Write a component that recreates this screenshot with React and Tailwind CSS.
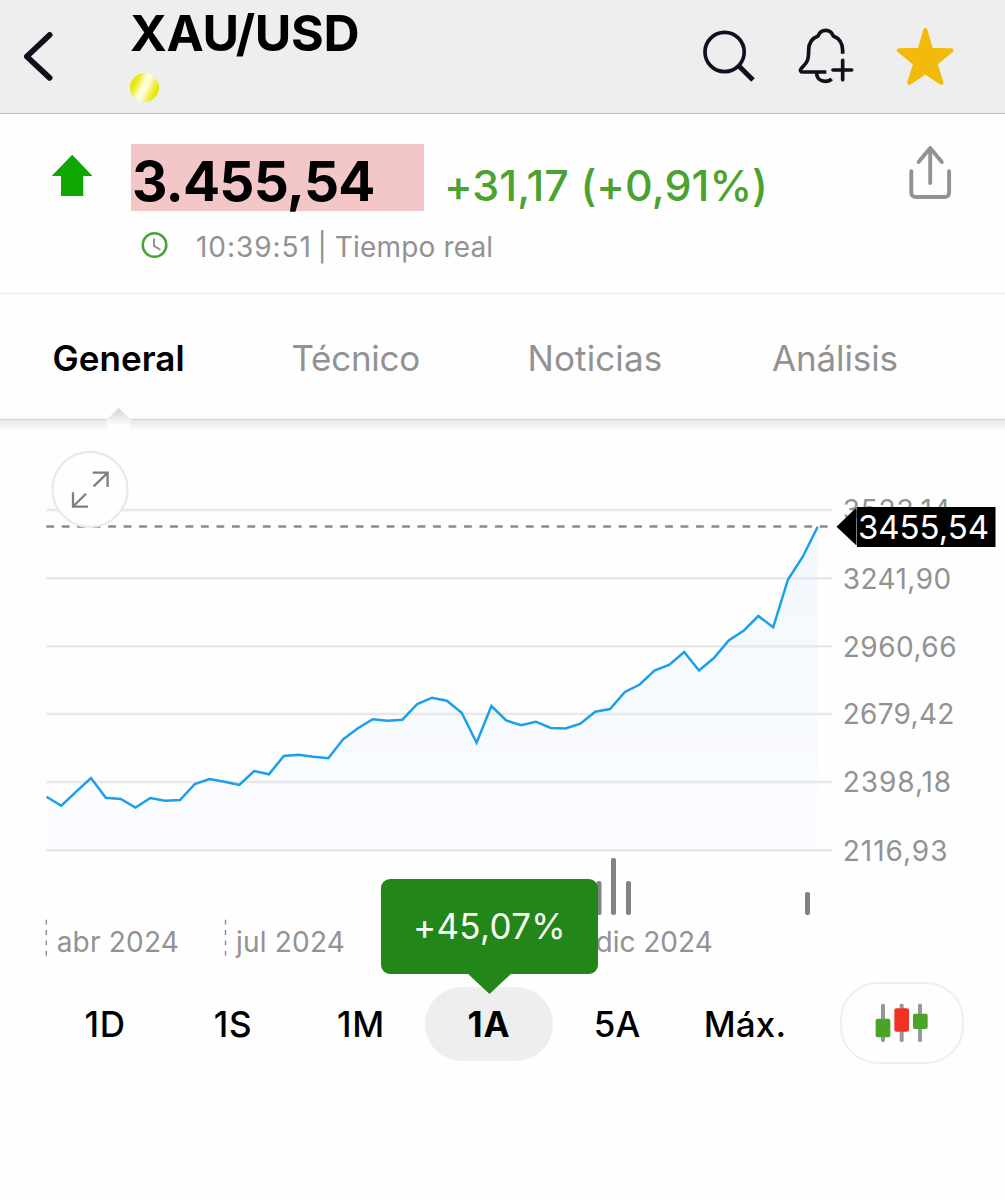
const tabs = [
  { label: 'General', active: true, style: 'tracking-[0.05px]' },
  { label: 'Técnico', style: 'ml-[106.7px] tracking-[-0.25px]' },
  { label: 'Noticias', style: 'ml-[107.5px] tracking-[0.1px]' },
  { label: 'Análisis', style: 'ml-[109.7px] tracking-[-0.1px]' },
];

const ranges = [
  { label: '1D', tracking: 'tracking-[0.7px]' },
  { label: '1S', tracking: 'tracking-[0.7px]' },
  { label: '1M', tracking: 'tracking-[0.7px]' },
  { label: '1A', change: '+45,07%' },
  { label: '5A', tracking: 'tracking-[0.1px]' },
  { label: 'Máx.', tracking: 'tracking-[0.2px]' },
];

const gridRows = [
  { y: 510, label: '3523,14', spacing: 0.8 },
  { y: 578.3, label: '3241,90', spacing: 0.45 },
  { y: 646.3, label: '2960,66', spacing: 0.5 },
  { y: 714, label: '2679,42', spacing: 0.3 },
  { y: 782, label: '2398,18', spacing: 0.95 },
  { y: 850.3, label: '2116,93', spacing: 1 },
];

// weekly closes, one point every STEP px
const X0 = 46.5;
const STEP = 14.83;
const closes = [
  796.7, 805.7, 791.7, 778, 797.7, 799, 807.5, 798, 800.7, 800, 784, 779, 781.7, 785, 771, 774.3, 756, 754.7,
  756.7, 758.3, 739.3, 728.3, 719.3, 720.7, 719.7, 704, 697.7, 700.7, 712.7, 742.7, 706, 720.5, 725.3, 721.7,
  728, 728.5, 723.7, 711.7, 709, 692, 684.5, 670.5, 664.7, 652, 670.5, 658, 640.5, 630.8, 616, 627.3, 579.5,
  556.7, 526.7,
];
const line = closes.map((y, i) => `${(X0 + i * STEP).toFixed(1)},${y}`).join(' ');
const lastX = X0 + (closes.length - 1) * STEP;

const volumes = [
  { x: 599, top: 881 },
  { x: 613.5, top: 858 },
  { x: 628.5, top: 881 },
  { x: 807.5, top: 892 },
];

const dates = [
  { x: 46.3, textX: 56.7, label: 'abr 2024', spacing: 0.2 },
  { x: 225.5, textX: 236, label: 'jul 2024', spacing: 0.2 },
  { textX: 595.5, label: 'dic 2024', spacing: 0 },
];

function Header() {
  return (
    <header className="flex h-[114px] border-b border-[#bdbdbd] bg-[#eeeeee]">
      <svg className="ml-6 mt-8 h-[50px] w-[30px] shrink-0" viewBox="24 32 30 50" fill="none">
        <path d="M49.6 35 26.8 56.5l22.8 21.3" stroke="#10101c" strokeWidth="5.8" strokeLinecap="round" strokeLinejoin="round" />
      </svg>

      <div className="ml-[76px] flex flex-col">
        <h1 className="mt-[3px] text-[50px] leading-[60px] font-bold tracking-[-0.4px] whitespace-nowrap text-black">XAU/USD</h1>
        <span className="mt-[10px] size-[29px] rounded-full bg-[linear-gradient(115deg,#e2e200_10%,#ecec20_26%,#fcfcc8_42%,#fefee4_52%,#f3f370_66%,#e6e600_82%,#f0f060_100%)]" />
      </div>

      <div className="ml-auto flex pr-[49px]">
        <svg className="mt-[28px] h-[56px] w-[56px]" viewBox="702 28 56 56" fill="none" stroke="#10101c">
          <circle cx="724.6" cy="52" r="19.6" strokeWidth="3.7" />
          <path d="M738.6 65.8 753 80" strokeWidth="5" />
        </svg>
        <svg className="ml-[39px] mt-[26px] h-[60px] w-[60px]" viewBox="354 78 180 180" fill="none" stroke="#10101c" strokeWidth="11" strokeLinejoin="round">
          <path d="M491 161V152C491 131 481 115 463 108C458 95 450 91 440 91S422 95 417 108C399 115 389 131 389 150C389 186 382 189 367 205C362 211 365 216 371 216H442" />
          <path d="M413 219C413 235 425 244 439 244C447 244 453 242 458 237" />
          <path d="M491 181V239M462 210H518" strokeLinecap="round" />
        </svg>
        <svg className="ml-[39px] mt-[26px] h-[60px] w-[60px]" viewBox="648 78 180 180">
          <path
            d="M736 91 753 150 814 151 766 191 784 248 736 216 688 248 706 191 657 151 719 150Z"
            fill="#f2bb0c"
            stroke="#f2bb0c"
            strokeWidth="13"
            strokeLinejoin="round"
          />
        </svg>
      </div>
    </header>
  );
}

function Quote() {
  return (
    <section className="flex h-[180px] border-b border-[#ebebeb]">
      <svg className="ml-[51px] mt-[40px] h-[43px] w-[43px] shrink-0" viewBox="51 154 43 43">
        <path d="M51.7 176 72.2 154.7 92.5 176H83.3V196H61V176Z" fill="#10a800" />
      </svg>

      <div className="ml-[37px] flex flex-col">
        <div className="flex">
          <span className="mt-[30px] h-[67px] w-[293px] bg-[#f3c6c8] pt-[4px] pl-px text-[55px] leading-[67px] font-bold tracking-[-0.85px] text-black">
            3.455,54
          </span>
          <span className="mt-[41px] ml-[20px] text-[43px] leading-[60px] font-medium tracking-[0.03px] whitespace-nowrap text-[#4ca22f]">
            +31,17 (+0,91%)
          </span>
        </div>
        <div className="mt-[14px] flex items-center pl-[9px]">
          <svg className="-mt-1 size-[28px]" viewBox="140.2 230.7 28 28" fill="none">
            <circle cx="154.7" cy="244.7" r="11.8" stroke="#4ca22f" strokeWidth="2.5" />
            <path d="M154.2 238.2V245.6L160.6 249.4" stroke="#8f8f92" strokeWidth="1.9" />
          </svg>
          <span className="ml-[28px] text-[28px] leading-[36px] tracking-[0.15px] whitespace-pre text-[#929292]">
            <span className="mr-[-2.5px] tracking-[0.95px]">10:39:51</span> | Tiempo real
          </span>
        </div>
      </div>

      <svg className="mr-[52px] mt-[30px] ml-auto h-[58px] w-[46px]" viewBox="907 144 46 58" fill="none" stroke="#929292" strokeWidth="3.9" strokeLinecap="round" strokeLinejoin="round">
        <path d="M930.2 183V148.2M918.6 162 930.2 148 941.8 162" />
        <path d="M911.3 171.2V192.2Q911.3 197 916.1 197H944.3Q949.1 197 949.1 192.2V171.2" />
      </svg>
    </section>
  );
}

function Tabs() {
  return (
    <nav className="flex h-[125px] pl-[52.5px] text-[35px] leading-[128px]">
      {tabs.map((t) => (
        <span key={t.label} className={`${t.style} ${t.active ? 'font-semibold text-black' : 'text-[#929292]'}`}>
          {t.label}
        </span>
      ))}
    </nav>
  );
}

function Chart() {
  return (
    <svg className="block h-[563px] w-[1005px]" viewBox="0 405 1005 563" fill="none">
      <defs>
        <linearGradient id="area" x1="0" y1="526" x2="0" y2="850" gradientUnits="userSpaceOnUse">
          <stop offset="0" stopColor="#f2f8fe" />
          <stop offset="1" stopColor="#fbfcfe" />
        </linearGradient>
        <linearGradient id="shade" x1="0" y1="419" x2="0" y2="431" gradientUnits="userSpaceOnUse">
          <stop offset="0" stopColor="#e6e6e6" />
          <stop offset="1" stopColor="#fefefe" />
        </linearGradient>
        <linearGradient id="notch" x1="0" y1="408" x2="0" y2="426" gradientUnits="userSpaceOnUse">
          <stop offset="0" stopColor="#d4d4d4" />
          <stop offset="1" stopColor="#fefefe" />
        </linearGradient>
      </defs>

      {/* lower edge of the tab bar, with the pointer of the active tab */}
      <rect y="419" width="1005" height="13" fill="url(#shade)" />
      <rect y="418.8" width="1005" height="1.3" fill="#d6d6d6" />
      <path d="M106 420 118.7 408 131.5 420 127 432H110Z" fill="url(#notch)" />

      <polygon points={`${X0},850 ${line} ${lastX},850`} fill="url(#area)" />
      {gridRows.map((r) => (
        <path key={r.label} d={`M46.3 ${r.y}H832`} stroke="#e7e8ea" strokeWidth="2.4" />
      ))}
      <path d="M46.3 526.6H828" stroke="#8a8a8a" strokeWidth="2.5" strokeDasharray="7.8 7.67" />
      <polyline points={line} stroke="#1b9fe9" strokeWidth="2.5" strokeLinejoin="miter" />

      <g fill="#929292" fontSize="28">
        {gridRows.map((r) => (
          <text key={r.label} x="842.7" y={r.y + 10.2} letterSpacing={r.spacing}>{r.label}</text>
        ))}
      </g>

      <path d="M836.5 526.7 856.5 507.5V545.5Z" fill="#000" />
      <rect x="857" y="507" width="138.5" height="40" fill="#000" />
      <text x="858" y="539" fill="#fff" fontSize="33" letterSpacing="-0.05">3455,54</text>

      {volumes.map((v) => (
        <rect key={v.x} x={v.x - 2.5} y={v.top} width="5" height={915 - v.top} rx="2" fill="#808285" />
      ))}

      <g fill="#929292" fontSize="28">
        {dates.map((d) => (
          <g key={d.label}>
            {d.x && <path d={`M${d.x} 919.7V956`} stroke="#8a8a8a" strokeWidth="1.4" strokeDasharray="4.8 5.6" />}
            <text x={d.textX} y="952" letterSpacing={d.spacing}>{d.label}</text>
          </g>
        ))}
      </g>

      <circle cx="90" cy="489.4" r="37.5" fill="#fefefe" fillOpacity="0.92" stroke="#e9e9e9" strokeWidth="2.2" />
      <g stroke="#7e7e7e" strokeWidth="2.3">
        <path d="M92.7 472.7H107.6V487M107.3 473.2 93.7 486.3" />
        <path d="M73 492.3V506.7H88M73.3 506.3 86 493.7" />
      </g>
    </svg>
  );
}

function Ranges() {
  return (
    <div className="mt-[14px] flex h-[82px] items-center pt-[2px] pl-[41px]">
      {ranges.map((r) =>
        r.change ? (
          <div key={r.label} className="relative flex h-[74px] w-[128px] items-center justify-center rounded-full bg-[#eeeeee] text-[35px] font-bold tracking-[0.8px] text-black">
            {r.label}
            <div className="absolute bottom-[87px] left-[-44px] flex h-[95px] w-[217px] items-center justify-center rounded-[9px] bg-[#238619] text-[35px] font-normal tracking-[0.3px] text-[#fafff8]">
              {r.change}
              <svg className="absolute top-[94px] left-[86px] h-[21px] w-[45px]" viewBox="0 0 45 21">
                <path d="M0 0H45L22.5 21Z" fill="#238619" />
              </svg>
            </div>
          </div>
        ) : (
          <div key={r.label} className={`flex w-[128px] justify-center text-[35px] font-medium text-black ${r.tracking}`}>
            {r.label}
          </div>
        )
      )}

      <div className="-mt-[2px] ml-[31px] flex h-[82px] w-[124px] items-center justify-center rounded-[38px] border-2 border-[#efefef]">
        <svg className="h-[40px] w-[54px]" viewBox="826 489 162 120">
          <g fill="#979797">
            <rect x="844" y="491" width="12" height="115" rx="5" />
            <rect x="900" y="491" width="12" height="115" rx="5" />
            <rect x="955" y="491" width="12" height="115" rx="5" />
          </g>
          <rect x="828" y="536" width="44" height="56" rx="6" fill="#4aa326" />
          <rect x="884" y="505" width="44" height="70" rx="6" fill="#f03224" />
          <rect x="940" y="521" width="44" height="46" rx="6" fill="#4aa326" />
        </svg>
      </div>
    </div>
  );
}

export default function App() {
  return (
    <main className="min-h-[1200px] w-[1005px] overflow-hidden bg-[#fefefe] font-['Inter',sans-serif]">
      <Header />
      <Quote />
      <Tabs />
      <div className="-mt-[14px]">
        <Chart />
      </div>
      <Ranges />
    </main>
  );
}
